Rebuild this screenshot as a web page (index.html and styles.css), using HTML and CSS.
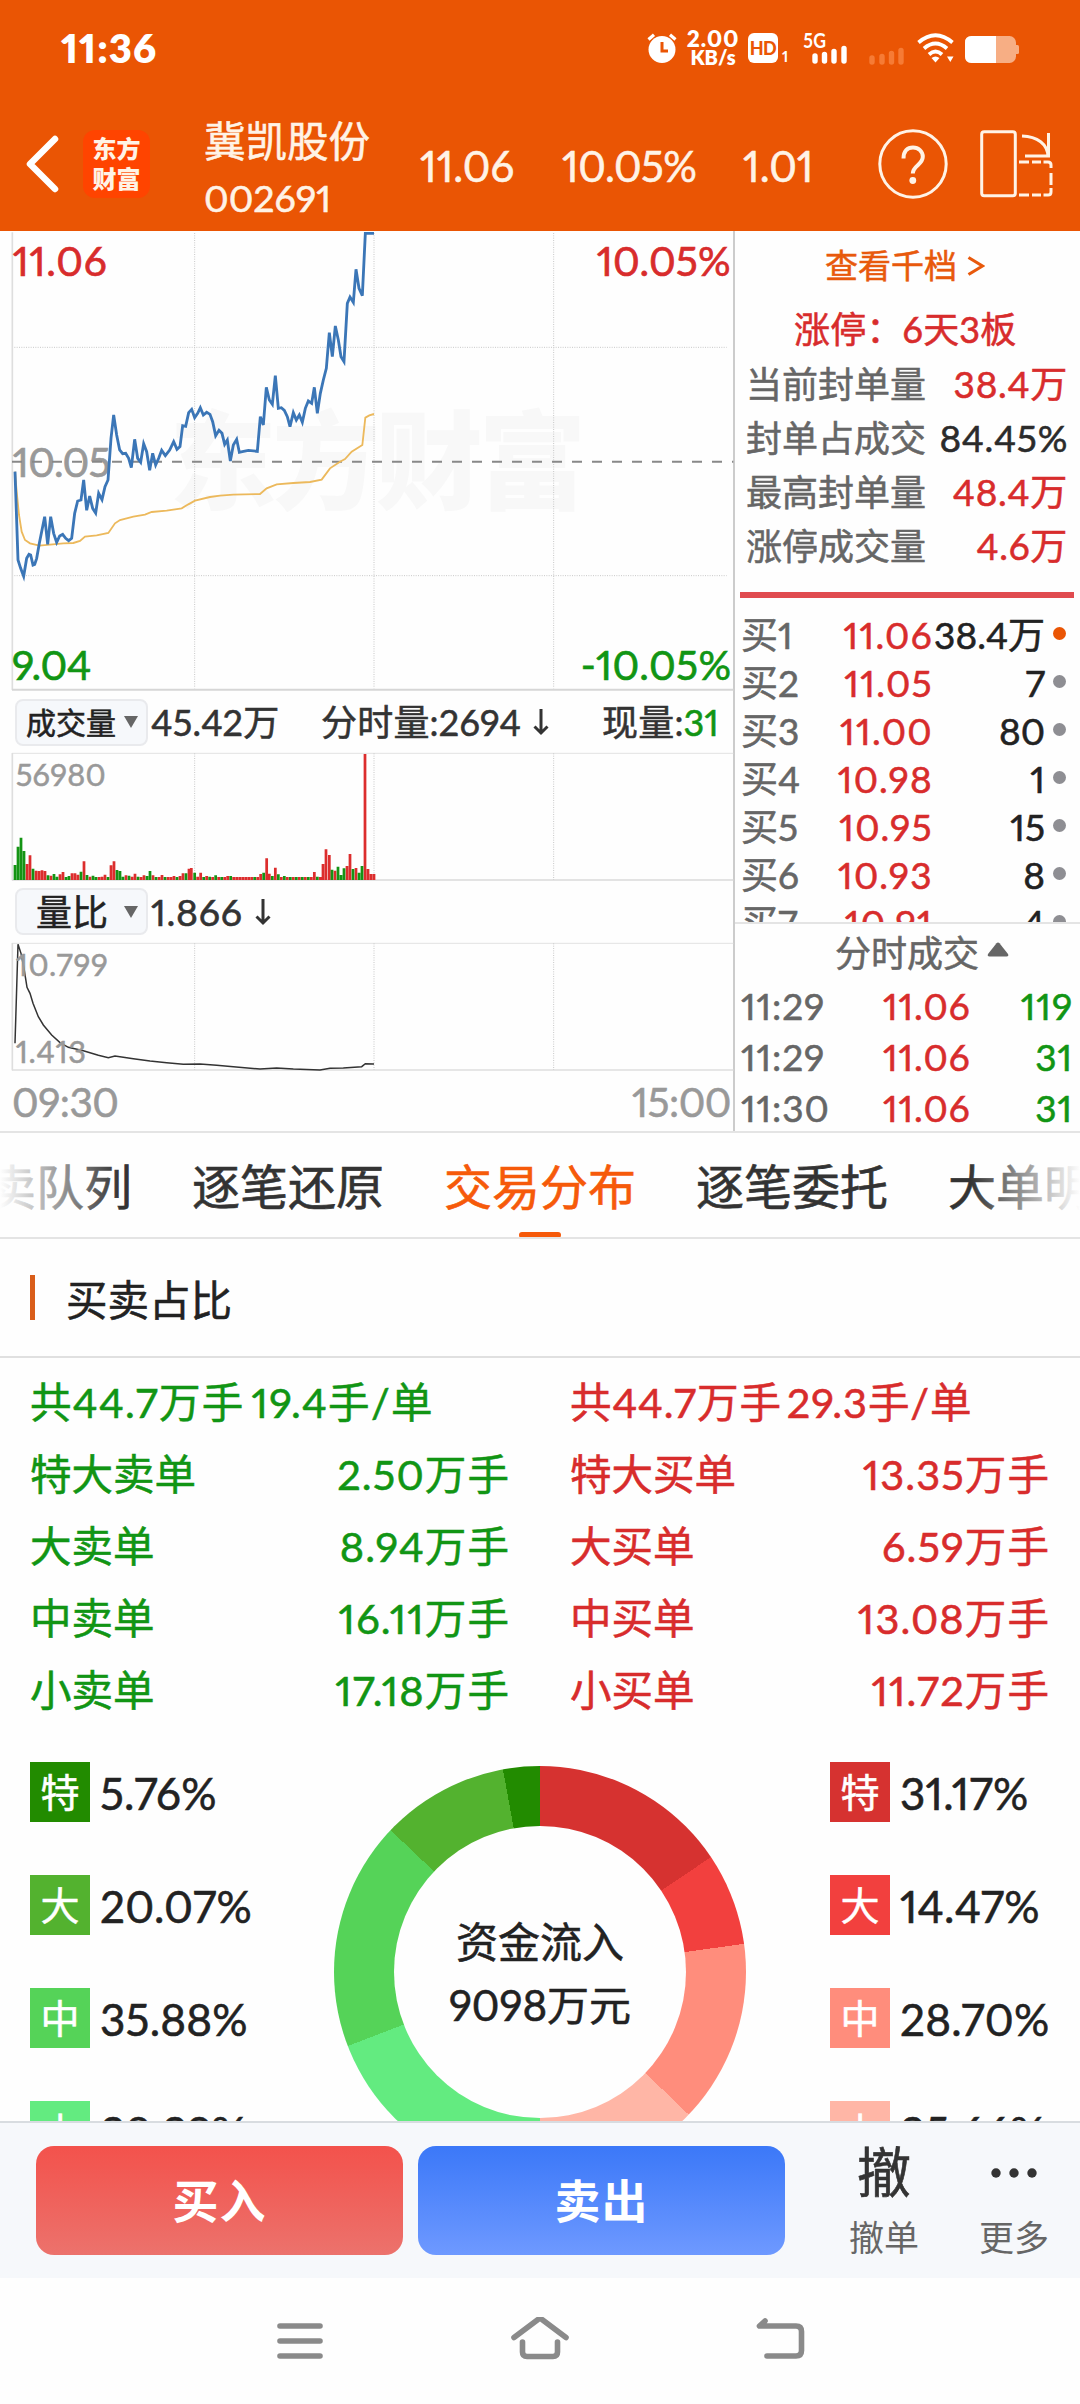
FILE: index.html
```html
<!DOCTYPE html>
<html lang="zh-CN">
<head>
<meta charset="utf-8">
<title>冀凯股份 002691</title>
<link rel="stylesheet" href="styles.css">
</head>
<body>
<header class="header">
  <div class="status">
    <span class="clock">11:36</span>
    <div class="status-icons">
      <svg class="i-alarm" viewBox="0 0 30 30" width="30" height="30"><circle cx="15" cy="16.5" r="13.5" fill="#fff"/><path d="M1.5 6.5 7 1.8M28.500 6.500 23 1.800" stroke="#fff" stroke-width="3.200"/><path d="M15 9v9h6" fill="none" stroke="#ea5504" stroke-width="3"/></svg>
      <span class="speed"><b>2.00</b><b class="unit">KB/s</b></span>
      <span class="hd">HD</span><span class="sim">1</span>
      <svg class="i-cell" viewBox="0 0 46 32" width="46" height="32"><text x="0" y="15.500" class="net" textLength="23" lengthAdjust="spacingAndGlyphs">5G</text><path d="M12 24v5M21.500 22.500v6.500M31 19.500v9.500M41 16.500v12.500" stroke="#fff" stroke-width="5.400" stroke-linecap="round"/></svg>
      <svg class="i-cell2" viewBox="0 0 36 18" width="36" height="18"><path d="M3 11v4M13 9.500v5.500M22.500 6.500v8.500M32 3.500v11.500" stroke="#f67b35" stroke-width="5.400" stroke-linecap="round"/></svg>
      <svg class="i-wifi" viewBox="0 0 38 30" width="38" height="30"><g fill="none" stroke="#fff" stroke-width="3.800"><path d="M1.500 9.500Q18.500-5 35.500 9.500"/><path d="M7 15.500Q18.500 5.500 30 15.500"/><path d="M12 21.500Q18.500 15.500 25 21.500"/></g><path d="M14.500 25Q18.500 22 22.500 25L18.500 29.500ZM30 23.500h6.500l-3.200 5.500z" fill="#fff"/></svg>
      <svg class="i-bat" viewBox="0 0 54 27" width="54" height="27"><rect width="51" height="27" rx="6.500" fill="#f7ae84"/><path d="M51 9h1.500q1.500 0 1.500 1.500v6q0 1.500-1.500 1.500H51z" fill="#f7ae84"/><path d="M6.500 0H31v27H6.500Q0 27 0 20.500v-14Q0 0 6.500 0z" fill="#fff"/></svg>
    </div>
  </div>
  <div class="titlebar">
    <svg class="back" viewBox="0 0 36 58" width="36" height="58"><path d="M31 4 6 29l25 25" fill="none" stroke="#fff" stroke-width="6.500" stroke-linecap="round" stroke-linejoin="round"/></svg>
    <div class="logo"><span>东方</span><span>财富</span></div>
    <div class="stock"><span class="name">冀凯股份</span><span class="code">002691</span></div>
    <div class="quote"><span class="q-price">11.06</span><span class="q-pct">10.05%</span><span class="q-chg">1.01</span></div>
    <svg class="help" viewBox="0 0 70 70" width="70" height="70"><g fill="none" stroke="#fff3e6" stroke-width="3"><circle cx="35" cy="35" r="33.200"/><path d="M25.500 29.500C25.500 22 29.500 18.500 35 18.500s9.800 4 9.800 9.300c0 8-10 8.700-10 16.700" stroke-width="4"/></g><circle cx="34.800" cy="51.500" r="3.400" fill="#fff3e6"/></svg>
    <svg class="rotate" viewBox="0 0 74 70" width="74" height="70"><g fill="none" stroke="#fff3e6" stroke-width="3"><rect x="1.700" y="2.700" width="33.600" height="64" rx="2.500"/><path d="M42 7c15 .500 26 8 26 21M68.500 4v23M45 27h25"/><path d="M39 33h10M52 33h9M63.500 33h4.500q3 0 3 3v3M71 44v12M71 59v4q0 3-3 3h-4.500M61 66h-9M49 66H39"/></g></svg>
  </div>
</header>

<section class="market">
  <div class="charts">
    <svg class="chart-main" viewBox="0 18 2205 1380" width="735" height="460">
      <text class="watermark" x="508" y="829" textLength="1250">东方财富</text>
      <path class="grid" d="M36 367H2180M36 1052H2180M584 24V1390M1122 24V1390M1661 24V1390"/>
      <path d="M37 22V1395" stroke="#dedede" stroke-width="5"/><path d="M36 1394H2200" stroke="#d6d6d6" stroke-width="6"/>
      <text class="lbl gray" x="38" y="756" textLength="294">10.05</text>
      <path d="M36 710H2200" stroke="#888" stroke-width="6" stroke-dasharray="30 30"/>
      <polyline class="avg" points="45,740 50,800 57,870 65,920 75,945 90,955 118,962 150,959 190,955 220,954 240,948 255,935 290,931 325,924 345,895 360,885 400,875 435,869 455,861 500,857 545,850 565,838 585,827 630,816 660,812 700,809 780,807 800,790 830,778 880,774 930,771 965,764 990,730 1020,710 1035,702 1055,680 1087,660 1096,578 1108,571 1122,567"/>
      <polyline class="price" points="45,740 54,1005 62,1030 71,1054 80,1000 87,988 92,990 99,1020 104,1018 110,1000 118,955 126,915 134,875 143,958 152,875 161,925 170,952 179,933 188,928 197,940 206,947 215,940 224,865 233,828 243,825 251,765 260,856 269,813 278,850 287,864 296,805 306,824 315,785 324,765 333,640 341,570 350,630 359,675 368,686 377,685 386,700 394,728 404,643 413,700 422,712 431,656 440,680 449,736 458,685 467,720 476,700 485,676 496,692 509,675 521,650 531,673 540,665 548,602 557,604 566,563 575,553 584,578 593,565 601,548 610,570 620,562 630,568 638,590 647,632 657,616 666,625 674,658 682,645 691,708 700,660 710,643 718,682 727,680 745,676 772,679 781,575 790,600 799,487 808,525 817,538 826,452 835,550 844,548 853,556 862,575 870,605 880,563 889,585 898,570 907,592 916,550 925,528 935,535 943,487 952,565 961,505 970,465 979,430 988,323 997,395 1006,303 1015,345 1023,395 1032,410 1042,235 1050,216 1060,232 1068,133 1077,190 1087,212 1096,25 1122,25"/>
      <text class="lbl red" x="38" y="152" textLength="282">11.06</text>
      <text class="lbl red" x="1790" y="152" textLength="402">10.05%</text>
      <text class="lbl green" x="36" y="1365" textLength="238">9.04</text>
      <text class="lbl green" x="1742" y="1365" textLength="451">-10.05%</text>
    </svg>
    <div class="bar-row">
      <span class="picker small">成交量<i></i></span><span>45.42万</span><span>分时量:2694<svg class="down" viewBox="0 0 16 28" width="16" height="28"><path d="M8 1v24M1.500 18.500 8 25l6.500-6.500"/></svg></span><span>现量:<em class="green">31</em></span>
    </div>
    <svg class="chart-sub" viewBox="0 180 2205 396" width="735" height="132">
      <path d="M36 190H2200" stroke="#e2e2e2" stroke-width="3"/><path d="M37 189V571" stroke="#dedede" stroke-width="5"/><path d="M36 570H2200" stroke="#dadada" stroke-width="5"/>
      <path class="grid" d="M584 190V570M1122 190V570M1661 190V570"/>
      <text class="sub" x="47" y="288" textLength="270">56980</text>
      <path class="vol r" d="M81 570v-48M90 570v-74M108 570v-28M117 570v-27M126 570v-29M135 570v-27M153 570v-13M180 570v-17M189 570v-24M216 570v-20M225 570v-20M234 570v-16M252 570v-56M270 570v-10M297 570v-9M306 570v-10M315 570v-16M333 570v-44M342 570v-56M378 570v-14M396 570v-10M405 570v-19M423 570v-9M432 570v-14M459 570v-14M477 570v-9M486 570v-15M504 570v-9M513 570v-9M522 570v-12M540 570v-12M549 570v-20M567 570v-34M574 570v-36M593 570v-10M602 570v-22M620 570v-12M638 570v-9M656 570v-9M674 570v-9M683 570v-12M701 570v-9M710 570v-9M719 570v-9M728 570v-9M737 570v-9M746 570v-9M755 570v-9M773 570v-9M782 570v-18M800 570v-65M808 570v-19M826 570v-37M844 570v-9M862 570v-9M880 570v-9M898 570v-9M916 570v-9M934 570v-9M943 570v-24M961 570v-9M969 570v-48M978 570v-92M988 570v-75M1005 570v-28M1041 570v-42M1050 570v-78M1068 570v-36M1095 570V192M1104 570v-33M1113 570v-18M1122 570v-18"/>
      <path class="vol g" d="M45 570v-45M54 570v-100M63 570v-127M72 570v-87M99 570v-34M144 570v-14M162 570v-18M171 570v-10M198 570v-9M207 570v-12M243 570v-25M261 570v-15M279 570v-13M288 570v-9M324 570v-9M351 570v-30M360 570v-27M369 570v-10M387 570v-13M414 570v-10M441 570v-12M450 570v-27M468 570v-9M495 570v-9M531 570v-9M558 570v-20M584 570v-22M611 570v-9M629 570v-10M647 570v-14M665 570v-9M692 570v-12M764 570v-9M791 570v-22M817 570v-12M835 570v-17M853 570v-12M871 570v-9M889 570v-9M907 570v-9M925 570v-9M952 570v-10M996 570v-31M1014 570v-40M1023 570v-15M1032 570v-35M1059 570v-33M1077 570v-22M1086 570v-42"/>
    </svg>
    <div class="bar-row second">
      <span class="picker">量比<i></i></span><span class="num">1.866<svg class="down" viewBox="0 0 16 28" width="16" height="28"><path d="M8 1v24M1.500 18.500 8 25l6.500-6.500"/></svg></span>
    </div>
    <svg class="chart-sub" viewBox="0 750 2205 396" width="735" height="132">
      <path d="M36 760H2200" stroke="#e2e2e2" stroke-width="3"/><path d="M37 759V1141" stroke="#dedede" stroke-width="5"/><path d="M36 1140H2200" stroke="#dedede" stroke-width="5"/>
      <path class="grid" d="M584 760V1140M1122 760V1140M1661 760V1140"/>
      <polyline class="ratio" points="45,1060 54,763 63,790 72,835 81,892 90,910 99,940 115,980 130,1005 155,1035 180,1058 205,1072 250,1082 295,1096 325,1103 345,1098 400,1106 450,1113 500,1118 550,1123 600,1122 650,1126 700,1130 780,1137 830,1134 880,1137 960,1140 990,1135 1030,1134 1085,1130 1096,1121 1122,1122"/>
      <text class="sub" x="47" y="858" textLength="276">10.799</text>
      <text class="sub" x="47" y="1118" textLength="211">1.413</text>
    </svg>
    <div class="axis"><span>09:30</span><span>15:00</span></div>
  </div>

  <aside class="side">
    <div class="depth">查看千档 <svg viewBox="0 0 18 24" width="18" height="24"><path d="M1.500 3.500 15.500 12 1.500 20.500" fill="none" stroke="#e8590c" stroke-width="3.200"/></svg></div>
    <div class="limit red">涨停：6天3板</div>
    <dl class="seal">
      <div><dt>当前封单量</dt><dd class="red">38.4万</dd></div>
      <div><dt>封单占成交</dt><dd>84.45%</dd></div>
      <div><dt>最高封单量</dt><dd class="red">48.4万</dd></div>
      <div><dt>涨停成交量</dt><dd class="red">4.6万</dd></div>
    </dl>
    <div class="divider"></div>
    <div class="book">
      <div><span>买1</span><span class="p">11.06</span><span class="v">38.4万</span><i class="hot"></i></div>
      <div><span>买2</span><span class="p">11.05</span><span class="v">7</span><i></i></div>
      <div><span>买3</span><span class="p">11.00</span><span class="v">80</span><i></i></div>
      <div><span>买4</span><span class="p">10.98</span><span class="v">1</span><i></i></div>
      <div><span>买5</span><span class="p">10.95</span><span class="v">15</span><i></i></div>
      <div><span>买6</span><span class="p">10.93</span><span class="v">8</span><i></i></div>
      <div><span>买7</span><span class="p">10.91</span><span class="v">4</span><i></i></div>
    </div>
    <div class="ticks-head">分时成交<svg viewBox="0 0 22 15" width="22" height="15"><path d="M9.500 1.200q1.500-1.200 3 0L21 12q1 2.500-1.500 2.500h-17Q0 14.500 1 12z" fill="#666"/></svg></div>
    <div class="ticks">
      <div><span>11:29</span><span class="red">11.06</span><span class="green">119</span></div>
      <div><span>11:29</span><span class="red">11.06</span><span class="green">31</span></div>
      <div><span>11:30</span><span class="red">11.06</span><span class="green">31</span></div>
    </div>
  </aside>
</section>

<nav class="tabs"><span>买卖队列</span><span>逐笔还原</span><span class="active">交易分布</span><span>逐笔委托</span><span>大单明细</span></nav>

<main class="content">
  <h2 class="heading">买卖占比</h2>
  <div class="totals">
    <div class="green">
      <p class="sum"><span>共44.7万手</span><span>19.4手/单</span></p>
      <p><span>特大卖单</span><span class="n">2.50万手</span></p>
      <p><span>大卖单</span><span class="n">8.94万手</span></p>
      <p><span>中卖单</span><span class="n">16.11万手</span></p>
      <p><span>小卖单</span><span class="n">17.18万手</span></p>
    </div>
    <div class="red">
      <p class="sum"><span>共44.7万手</span><span>29.3手/单</span></p>
      <p><span>特大买单</span><span class="n">13.35万手</span></p>
      <p><span>大买单</span><span class="n">6.59万手</span></p>
      <p><span>中买单</span><span class="n">13.08万手</span></p>
      <p><span>小买单</span><span class="n">11.72万手</span></p>
    </div>
  </div>
  <div class="share">
    <ul class="legend">
      <li><b class="s1">特</b>5.76%</li><li><b class="s2">大</b>20.07%</li><li><b class="s3">中</b>35.88%</li><li><b class="s4">小</b>38.29%</li>
    </ul>
    <div class="donut"><div class="hole"><span>资金流入</span><span>9098万元</span></div></div>
    <ul class="legend">
      <li><b class="b1">特</b>31.17%</li><li><b class="b2">大</b>14.47%</li><li><b class="b3">中</b>28.70%</li><li><b class="b4">小</b>25.66%</li>
    </ul>
  </div>
</main>

<footer class="actions">
  <button class="buy">买入</button><button class="sell">卖出</button>
  <div class="act"><span class="glyph">撤</span><span>撤单</span></div>
  <div class="act"><span class="glyph"><svg viewBox="0 0 46 10" width="46" height="10"><g fill="#333"><circle cx="5" cy="5" r="4.700"/><circle cx="23" cy="5" r="4.700"/><circle cx="41" cy="5" r="4.700"/></g></svg></span><span>更多</span></div>
</footer>
<div class="sysnav">
  <svg viewBox="0 0 60 48" width="60" height="48"><path d="M10 9h40M10 24h40M10 39h40" /></svg>
  <svg viewBox="0 0 60 48" width="60" height="48"><path d="M4 20.500 28 2.500q2-1.500 4 0l24 18M12.500 25v10q0 4.500 4.500 4.500h26q4.500 0 4.500-4.500V25" /></svg>
  <svg viewBox="0 0 60 48" width="60" height="48"><path d="M15 4 9.500 9H46q5.500 0 5.500 5.500v19q0 5.500-5.500 5.500H17" /></svg>
</div>
</body>
</html>
```
FILE: styles.css
```css
* { box-sizing: border-box; margin: 0; padding: 0; }
body {
  width: 1080px; height: 2404px; overflow: hidden;
  display: flex; flex-direction: column;
  background: #fefefe; color: #2b2b2b;
  font-family: Lato, "Noto Sans CJK SC", sans-serif;
  font-size: 36px; font-weight: 400; font-feature-settings: "pnum";
  -webkit-text-stroke: .55px;
  white-space: nowrap;
}
em, i, b { font-style: normal; }
svg { display: block; flex: none; -webkit-text-stroke: 0; }
.red { color: #d82c2c; }
.green { color: #119514; }

.header { height: 231px; background: #ea5504; color: #fff3e6; flex: none; }
.status { height: 96px; display: flex; justify-content: space-between; align-items: center; padding: 0 60px 0 61px; color: #fff; -webkit-text-stroke: 0; }
.clock { font-size: 40px; font-weight: 800; letter-spacing: 1px; }
.status-icons { display: flex; align-items: center; width: 373px; }
.speed { width: 54px; margin-left: 9px; display: flex; flex-direction: column; align-items: center; font-size: 22.500px; line-height: 19px; letter-spacing: 1px; }
.speed .unit { font-size: 20px; letter-spacing: 0; }
.speed b { font-weight: 800; }
.hd { width: 30px; height: 30px; margin-left: 8px; border-radius: 6px; background: #fff; color: #ea5504; font: 900 18px/30px Lato; text-align: center; letter-spacing: -.5px; }
.sim { font-size: 15px; font-weight: 700; margin: 16px 0 0 4px; width: 10px; }
.i-cell { margin-left: 11px; }
.net { font: 700 20px Lato; fill: #fff; }
.i-cell2 { margin: 15px 0 0 20px; }
.i-wifi { margin-left: 12px; }
.i-bat { margin: 3px 0 0 10px; }

.titlebar { height: 135px; display: flex; align-items: center; padding-left: 24px; }
.logo { width: 67px; height: 68px; margin-left: 23px; border-radius: 12px; background: #ff4400; display: flex; flex-direction: column; justify-content: center; align-items: center; font-size: 24px; line-height: 30px; font-weight: 900; -webkit-text-stroke: 0; }
.stock { width: 178px; margin-left: 54px; padding-top: 13px; display: flex; flex-direction: column; font-size: 41.500px; line-height: 58px; }
.name { height: 58px; margin-top: -2px; }
.code { font-size: 37.500px; line-height: 56px; }
.quote { display: flex; font-size: 42px; margin-left: 38px; width: 458px; padding-top: 4px; }
.q-price { width: 142px; }
.q-pct { width: 181px; letter-spacing: -.5px; }
.rotate { margin-left: 32px; }

.market { height: 902px; flex: none; display: flex; border-bottom: 2px solid #e4e4e4; }
.charts { width: 735px; border-right: 2px solid #ccc; display: flex; flex-direction: column; }
.grid { stroke: #c8c8c8; stroke-width: 3; stroke-dasharray: 3 4; fill: none; }
.watermark { font: 900 322px "Noto Sans CJK SC"; fill: #f8f8f8; }
.lbl { font-family: Lato; font-size: 122px; stroke-width: 2; }
.lbl.red { fill: #d82c2c; stroke: #d82c2c; } .lbl.green { fill: #119514; stroke: #119514; } .lbl.gray { fill: #999; stroke: #999; }
.sub { font-family: Lato; font-size: 92px; fill: #999; stroke: #999; stroke-width: 1.500; }
.price { fill: none; stroke: #3b76b7; stroke-width: 8.500; }
.avg { fill: none; stroke: #ecb95c; stroke-width: 5.500; }
.ratio { fill: none; stroke: #333; stroke-width: 4.500; }
.vol { stroke-width: 8.200; } .vol.r { stroke: #dc2d2d; } .vol.g { stroke: #149414; }
.bar-row { height: 59px; padding: 3px 0 0 15px; display: grid; grid-template-columns: 136px 170px 281px auto; align-items: center; line-height: 56px; color: #333; letter-spacing: .2px; }
.bar-row > span { display: flex; align-items: center; }
.bar-row.second { padding-top: 1px; }
.bar-row.second .num { font-size: 37.500px; letter-spacing: .7px; }
.down { margin-left: 12px; fill: none; stroke: #333; stroke-width: 3; }
.bar-row .picker { width: 133px; height: 47px; padding-left: 19px; border: 2px solid #e9eaed; border-radius: 8px; background: #f6f8fb; color: #222; letter-spacing: 0; }
.bar-row .small { font-size: 30px; padding-left: 9px; }
.picker i { margin: 0 8px 0 auto; border: 7px solid transparent; border-top: 12px solid #666; border-bottom: 0; }
.axis { height: 60px; padding: 0 2px 0 12px; display: flex; justify-content: space-between; align-items: center; color: #999; font-size: 40.500px; letter-spacing: -.5px; }

.side { flex: 1; display: flex; flex-direction: column; overflow: hidden; }
.depth { height: 66px; flex: none; padding-left: 90px; display: flex; align-items: center; font-size: 33px; color: #e8590c; }
.depth svg { margin: 3px 0 0 10px; }
.limit { height: 60px; flex: none; padding-left: 59px; line-height: 64px; letter-spacing: .2px; }
.seal div { height: 54px; line-height: 54px; padding: 0 12px 0 11px; display: flex; justify-content: space-between; }
.seal dt { color: #666; }
.seal dd { font-size: 37px; letter-spacing: .7px; }
.divider { height: 6px; margin: 19px 6px 0 5px; background: #e04b4f; flex: none; }
.book { height: 324px; padding-top: 13px; overflow: hidden; flex: none; }
.book div { height: 48px; line-height: 48px; display: grid; grid-template-columns: 86px 106px 112px 22px; padding-left: 6px; align-items: center; color: #666; font-size: 37px; }
.book .p { color: #d82c2c; text-align: right; letter-spacing: 1.300px; }
.book .v { color: #222; text-align: right; }
.book i { width: 13px; height: 13px; border-radius: 50%; background: #8e8e93; margin-left: 8px; margin-top: -4px; }
.book i.hot { background: #ea5504; }
.ticks-head { height: 58px; flex: none; border-top: 2px solid #e4e4e4; padding: 0 0 2px 100px; display: flex; align-items: center; color: #666; }
.ticks-head svg { margin: -4px 0 0 8px; }
.ticks div { height: 51px; line-height: 51px; display: grid; grid-template-columns: 142px 94px 96px; padding-left: 6px; font-size: 37px; color: #666; letter-spacing: .9px; }
.ticks span:last-child { text-align: right; }

.tabs { height: 106px; flex: none; display: flex; gap: 60px; border-bottom: 2px solid #e4e4e4; font-size: 48px; line-height: 107px; color: #333; overflow: hidden; position: relative; -webkit-text-stroke-width: .6px; }
.tabs span:first-child { margin-left: -60px; }
.tabs .active { color: #f65a0a; display: flex; flex-direction: column; align-items: center; }
.tabs .active::after { content: ""; width: 42px; height: 6px; margin-top: -8px; border-radius: 3px; background: #f65a0a; flex: none; }
.tabs::after { content: ""; position: absolute; inset: 0 0 4px; background: linear-gradient(90deg, #fefefe 0, #fefefe00 120px, #fefefe00 970px, #fefefe 1080px); }

.content { height: 882px; flex: none; overflow: hidden; }
.heading { height: 119px; border-bottom: 2px solid #e0e0e0; padding-left: 30px; display: flex; align-items: center; font-size: 41.500px; font-weight: 400; color: #222; }
.heading::before { content: ""; width: 5px; height: 45px; background: #d95d1a; margin-right: 31px; }
.totals { display: flex; justify-content: space-between; padding: 8px 31px 0 30px; font-size: 41.500px; }
.totals > div { width: 479px; }
.totals p { height: 72px; line-height: 72px; display: flex; justify-content: space-between; }
.totals .n { letter-spacing: 1.100px; margin-right: -1px; }
.totals .sum { justify-content: flex-start; gap: 5px; letter-spacing: .9px; }
.totals .green .sum, .totals > .green .sum { gap: 7px; letter-spacing: 1.300px; }
.share { display: flex; justify-content: space-between; padding: 36px 0 0 30px; }
.legend { list-style: none; width: 250px; }
.legend li { height: 113px; display: flex; align-items: flex-start; gap: 10px; font-size: 44px; line-height: 63px; color: #222; letter-spacing: .2px; }
.legend b { width: 60px; height: 60px; line-height: 60px; font-size: 39px; font-weight: 400; color: #fff; text-align: center; letter-spacing: 0; }
.s1 { background: #228b00; } .s2 { background: #53b22f; } .s3 { background: #55d358; } .s4 { background: #63eb80; }
.b1 { background: #d63230; } .b2 { background: #f2403e; } .b3 { background: #ff8d7c; } .b4 { background: #ffb6a6; }
.donut { width: 412px; height: 412px; margin: 4px 30px 0 0; border-radius: 50%; display: flex; align-items: center; justify-content: center;
  background: conic-gradient(#d63230 0 15.585%, #f2403e 0 22.820%, #ff8d7c 0 37.170%, #ffb6a6 0 50%, #63eb80 0 69.145%, #55d358 0 87.085%, #53b22f 0 97.120%, #228b00 0); }
.hole { width: 292px; height: 292px; border-radius: 50%; background: #fefefe; display: flex; flex-direction: column; align-items: center; justify-content: center; padding-top: 4px; font-size: 42px; line-height: 63px; color: #222; }

.actions { height: 157px; flex: none; border-top: 2px solid #d8dce0; background: #f6f8fb; display: flex; padding: 23px 0 0 36px; -webkit-text-stroke: 0; }
.actions button { width: 367px; height: 109px; margin-right: 15px; border: 0; border-radius: 18px; color: #fff; font: 700 46px "Noto Sans CJK SC"; letter-spacing: 1px; padding-bottom: 5px; }
.buy { background: linear-gradient(#f3524c, #ec726c); }
.sell { background: linear-gradient(#3b78f8, #6e99ff); }
.act { width: 130px; margin-left: 19px; display: flex; flex-direction: column; align-items: center; font-size: 35px; line-height: 51px; color: #666; }
.act + .act { margin-left: 0; }
.glyph { height: 66px; line-height: 54px; font-size: 54px; color: #333; -webkit-text-stroke: .6px; }
.glyph svg { margin-top: 22px; }
.sysnav { flex: 1; display: flex; gap: 180px; padding: 39px 0 0 270px; background: #fefefe; }
.sysnav path { fill: none; stroke: #8a8a8a; stroke-width: 5.600; stroke-linecap: round; stroke-linejoin: round; }
```
